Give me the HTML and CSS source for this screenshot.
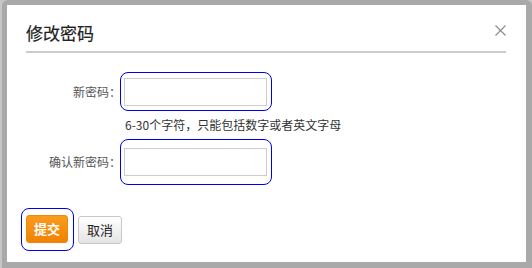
FILE: index.html
```html
<!DOCTYPE html>
<html lang="zh-CN">
<head>
<meta charset="utf-8">
<title>修改密码</title>
<link rel="stylesheet" href="styles.css">
</head>
<body>
<div class="frame">
  <div class="dialog">
    <div class="dialog-header">
      <h1 class="dialog-title">修改密码</h1>
      <span class="close" aria-label="关闭">
        <svg width="11" height="11" viewBox="0 0 11 11"><path d="M0.5 0.5L10.5 10.5M10.5 0.5L0.5 10.5" stroke="#8c8c8c" stroke-width="1.2" fill="none"/></svg>
      </span>
    </div>
    <div class="form">
      <div class="row row-first">
        <label class="label">新密码：</label>
        <span class="ring ring-a"><input class="input" type="password"></span>
      </div>
      <div class="hint">6-30个字符，只能包括数字或者英文字母</div>
      <div class="row row-second">
        <label class="label">确认新密码：</label>
        <span class="ring ring-b"><input class="input" type="password"></span>
      </div>
      <div class="actions">
        <span class="ring ring-btn"><button class="btn btn-primary">提交</button></span>
        <button class="btn btn-default">取消</button>
      </div>
    </div>
  </div>
</div>
</body>
</html>
```
FILE: styles.css
```css
html, body {
  margin: 0;
  padding: 0;
  width: 532px;
  height: 268px;
  overflow: hidden;
  background: #c6c6c6;
  font-family: "Noto Sans CJK SC", "Noto Sans", sans-serif;
}
.frame {
  margin-left: 2px;
  height: 268px;
  background: #a9a9a9;
  border-radius: 6px 6px 0 0;
  padding: 5px 0 0 5px;
  box-sizing: border-box;
}
.dialog {
  width: 519px;
  height: 257px;
  background: #fff;
  padding: 0 20px 0 19px;
  box-sizing: border-box;
}
.dialog-header {
  display: flex;
  justify-content: space-between;
  align-items: flex-start;
  padding-top: 16px;
  padding-bottom: 6px;
  border-bottom: 2px solid #cccccc;
}
.dialog-title {
  margin: 0;
  font-size: 17px;
  line-height: 24px;
  font-weight: normal;
  color: #222;
  -webkit-text-stroke: 0.2px #222;
}
.close {
  display: block;
  width: 11px;
  height: 11px;
  margin-top: 4px;
}
.close svg { display: block; }
.form {
  padding-top: 19px;
}
.row {
  display: grid;
  grid-template-columns: 94px auto;
  align-items: center;
  justify-content: start;
}
.label {
  text-align: right;
  font-family: "Noto Sans CJK JP", "Noto Sans CJK SC", sans-serif;
  font-size: 12px;
  color: #555;
  line-height: 16px;
  margin-right: -1px;
}
.ring {
  display: inline-block;
  border: 1.2px solid #0000f0;
  border-radius: 8px;
}
.ring-a { padding: 5px 4px 4px 3px; }
.ring-b { padding: 8px 4px 8px 3px; }
.input {
  display: block;
  width: 143px;
  height: 28px;
  box-sizing: border-box;
  border: 1px solid #cccccc;
  margin: 0;
  padding: 0 4px;
  outline: none;
  background: #fff;
}
.hint {
  margin: 6px 0 6px 99px;
  font-size: 12px;
  line-height: 16px;
  color: #333;
}
.actions {
  display: flex;
  align-items: center;
  gap: 4px;
  margin-top: 23px;
  margin-left: -5px;
}
.ring-btn { padding: 6px 5px 7px 4px; }
.btn {
  display: block;
  height: 28px;
  width: 44px;
  border-radius: 3px;
  font-family: "Noto Sans CJK SC", sans-serif;
  font-size: 13px;
  line-height: 26px;
  padding: 0;
  cursor: pointer;
}
.btn-primary {
  background: linear-gradient(#fb9b1e, #f08300);
  border: 1px solid #ec8a10;
  color: #fff;
  font-weight: bold;
  width: 42px;
}
.btn-default {
  background: linear-gradient(#ffffff, #e4e4e4);
  border: 1px solid #c8c8c8;
  color: #222;
}
```
